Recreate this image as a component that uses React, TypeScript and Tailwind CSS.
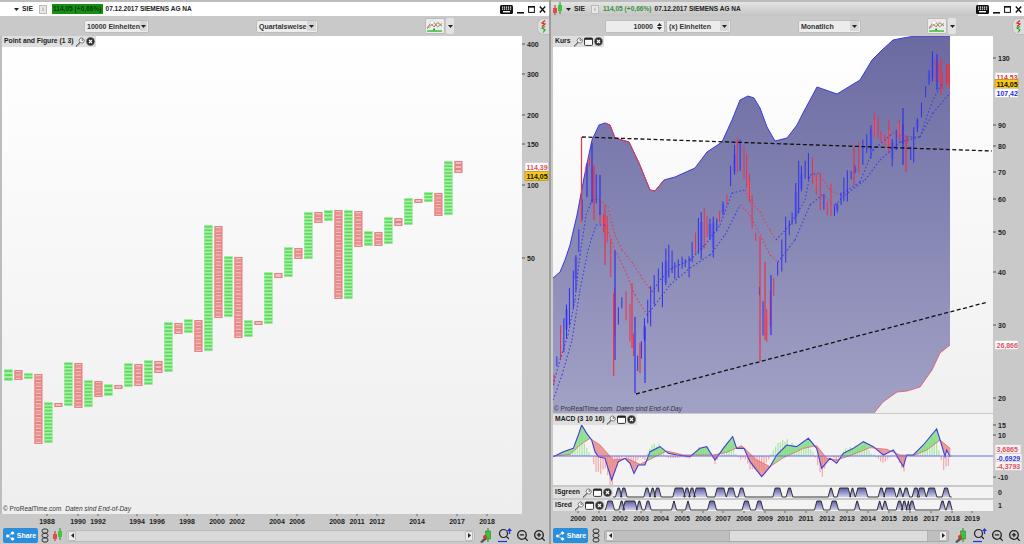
import React from 'react';
import { Search, Share2, ZoomIn, ZoomOut } from 'lucide-react';

type Pt = [number, number];

const rnd = (i: number) => Math.abs((Math.sin(i * 12.9898) * 43758.5453) % 1);

const interp = (pts: Pt[], x: number) => {
    if (x <= pts[0][0]) return pts[0][1];
    for (let i = 1; i < pts.length; i++) {
        if (x <= pts[i][0]) {
            const [x0, y0] = pts[i - 1];
            const [x1, y1] = pts[i];
            return y0 + ((y1 - y0) * (x - x0)) / (x1 - x0);
        }
    }
    return pts[pts.length - 1][1];
};

const toPoints = (pts: Pt[]) => pts.map(([x, y]) => `${x},${y}`).join(' ');

// point and figure columns: first column sits at x=4, one every 10px. [top, bottom]
const pfColumns: Pt[] = [
    [369, 381], [370, 380], [373, 379], [374, 444], [402, 443], [403, 407], [362, 406], [363, 408],
    [380, 407], [381, 397], [384, 396], [385, 389], [363, 387], [364, 386], [360, 385], [361, 373],
    [322, 372], [323, 334], [319, 333], [320, 352], [225, 351], [226, 318], [256, 317], [257, 338],
    [320, 337], [321, 325], [272, 324], [273, 278], [247, 277], [248, 259], [212, 259], [212, 223],
    [210, 221], [210, 299], [210, 299], [211, 247], [231, 246], [232, 246], [217, 244], [218, 226],
    [198, 225], [199, 203], [192, 202], [193, 216], [161, 215], [161, 173],
];

const topEnvelope: Pt[] = [
    [553, 278], [560, 272], [565, 260], [570, 245], [577, 215], [584, 178], [592, 140], [599, 125], [605, 123],
    [610, 125], [615, 138], [629, 142], [639, 163], [650, 190], [655, 191], [664, 180], [675, 177], [695, 168],
    [707, 152], [722, 142], [732, 120], [740, 100], [748, 96], [754, 98], [760, 108], [767, 127], [775, 141],
    [787, 138], [797, 125], [803, 113], [817, 87], [837, 94], [860, 80], [872, 60], [882, 50], [893, 40],
    [903, 38], [915, 36], [950, 36],
];
const bottomEnvelope: Pt[] = [
    [950, 345], [940, 353], [932, 370], [920, 387], [907, 391], [897, 392], [883, 402], [874, 413], [553, 413],
];

const priceCentre: Pt[] = [
    [553, 385], [556, 365], [560, 345], [565, 325], [570, 295], [575, 270], [578, 240], [582, 205], [586, 170],
    [590, 160], [594, 175], [598, 195], [602, 215], [606, 225], [610, 250], [613, 290], [616, 325], [622, 300],
    [628, 295], [632, 320], [636, 365], [640, 350], [645, 335], [650, 305], [655, 290], [660, 278], [665, 280],
    [672, 270], [680, 265], [690, 260], [700, 240], [705, 228], [712, 235], [720, 215], [727, 200], [732, 175],
    [737, 160], [743, 172], [750, 195], [756, 240], [760, 300], [764, 340], [768, 320], [772, 300], [778, 270],
    [785, 245], [795, 210], [800, 190], [806, 170], [812, 160], [816, 178], [820, 195], [826, 212], [835, 212],
    [845, 185], [855, 170], [865, 140], [875, 133], [885, 142], [892, 148], [900, 125], [905, 132], [910, 158],
    [915, 132], [920, 112], [925, 92], [932, 70], [937, 60], [942, 76], [947, 80], [950, 85],
];

const fastMa: Pt[] = [
    [553, 385], [560, 360], [568, 335], [575, 300], [580, 255], [586, 215], [592, 200], [600, 199], [608, 207],
    [615, 235], [622, 250], [632, 262], [640, 275], [652, 292], [660, 280], [672, 268], [690, 260], [705, 245],
    [720, 225], [732, 193], [745, 190], [752, 203], [760, 212], [770, 230], [776, 240], [790, 225], [805, 200],
    [810, 175], [818, 173], [830, 190], [840, 195], [860, 182], [873, 150], [893, 133], [907, 137], [920, 137],
    [932, 102], [942, 83], [950, 85],
];
const slowMa: Pt[] = [
    [553, 400], [562, 375], [572, 340], [580, 290], [588, 250], [596, 225], [606, 225], [615, 250], [625, 270],
    [635, 295], [647, 315], [655, 305], [670, 285], [690, 268], [710, 255], [725, 235], [740, 205], [750, 215],
    [760, 235], [770, 255], [778, 262], [795, 240], [810, 205], [822, 195], [835, 205], [845, 195], [865, 180],
    [880, 160], [900, 142], [920, 137], [933, 113], [950, 93],
];

const macdLine: Pt[] = [
    [10, 155], [40, 140], [70, 130], [85, 90], [95, 60], [110, 85], [125, 105], [135, 140], [145, 155], [165, 160],
    [185, 225], [205, 170], [225, 160], [240, 175], [252, 205], [265, 180], [285, 180], [300, 140], [330, 125],
    [355, 145], [380, 150], [420, 155], [450, 130], [470, 125], [495, 165], [520, 130], [548, 95], [560, 130],
    [582, 130], [600, 170], [635, 215], [660, 185], [680, 150], [710, 120], [740, 125], [775, 100], [800, 130],
    [815, 190], [840, 160], [860, 175], [880, 145], [910, 130], [940, 110], [970, 125], [1000, 150], [1030, 135],
    [1060, 185], [1070, 150], [1090, 150], [1120, 120], [1160, 72], [1175, 120], [1185, 155], [1190, 135], [1200, 155],
];
const signalLine: Pt[] = [
    [10, 153], [60, 148], [90, 120], [120, 100], [150, 120], [190, 165], [230, 160], [270, 178], [310, 158],
    [350, 138], [400, 150], [450, 150], [490, 150], [530, 142], [575, 122], [620, 165], [660, 185], [700, 158],
    [760, 130], [800, 122], [830, 160], [860, 165], [900, 152], [960, 128], [1010, 133], [1050, 150], [1090, 152],
    [1130, 135], [1170, 105], [1200, 130],
];
const macdX = (x: number) => 550 + x / 3;
const macdY = (y: number) => 405 + y / 3;

const isGreen: Pt[] = [
    [200, 212], [215, 228], [285, 297], [303, 313], [316, 330], [372, 402], [405, 417], [420, 432], [435, 468],
    [498, 525], [533, 553], [568, 582], [672, 693], [712, 725], [838, 848], [865, 898], [903, 912], [920, 950],
    [988, 1000], [1005, 1035], [1045, 1055], [1062, 1075], [1090, 1105], [1105, 1125], [1133, 1157], [1180, 1196],
];
const isRed: Pt[] = [
    [170, 190], [210, 220], [222, 258], [263, 273], [288, 300], [368, 376], [410, 418], [476, 496], [580, 598],
    [620, 636], [797, 817], [843, 862], [917, 926], [985, 993], [1000, 1010], [1042, 1055], [1058, 1068],
    [1072, 1078], [1080, 1092], [1172, 1183], [1192, 1203],
];

// the long wicks that the generated bars don't produce: x, top, bottom, blue?
const longBars: [number, number, number, boolean][] = [
    [581.5, 137, 222, false], [587, 163, 197, true], [592, 143, 203, true], [594, 165, 220, false],
    [600, 175, 215, true], [605, 205, 265, false], [615, 250, 360, true], [613.7, 293, 376, false],
    [632, 283, 348, false], [635, 317, 393, true], [645, 327, 383, true], [640, 343, 373, false],
    [760, 237, 361, false], [771, 275, 335, true], [765, 262, 340, false], [937, 54, 90, true],
    [941, 58, 95, false], [948, 64, 84, false], [854, 147, 185, false], [903, 108, 165, true], [906, 135, 172, false],
];

const PfChart = () => (
    <svg viewBox="2 36 520 478" className="block w-[520px] h-[478px]">
        <defs>
            <linearGradient id="chartBg" x1="0" y1="0" x2="0" y2="1">
                <stop offset="0" stopColor="#ffffff" />
                <stop offset="1" stopColor="#eeeeee" />
            </linearGradient>
        </defs>
        <rect x="2" y="36" width="520" height="478" fill="url(#chartBg)" />
        {pfColumns.map(([top, bottom], i) => {
            const x = 4 + i * 10;
            const green = i % 2 === 0;
            const rows = Math.max(1, Math.round((bottom - top) / 3.45));
            const h = (bottom - top) / rows;
            return (
                <g key={i}>
                    <rect x={x} y={top} width={8.8} height={bottom - top} fill={green ? '#aaeeaa' : '#efb0b0'} />
                    {Array.from({ length: rows }).map((_, r) =>
                        green ? (
                            <rect key={r} x={x + 0.6} y={top + r * h + h * 0.28} width={7.6} height={h * 0.5} fill="#5cdc5c" />
                        ) : (
                            <rect key={r} x={x + 1.1} y={top + r * h + 0.6} width={6.6} height={h - 1.2} fill="#f2bcbc" stroke="#e27878" strokeWidth="0.8" />
                        )
                    )}
                </g>
            );
        })}
        <text x="3" y="511" fontSize="6.5" fill="#333">
            © ProRealTime.com <tspan fontStyle="italic" dx="2">Daten sind End-of-Day</tspan>
        </text>
    </svg>
);

const PriceChart = () => {
    const bars = [];
    for (let i = 0, x = 554; x < 950; x += 2.6 + rnd(i + 7) * 1.6, i++) {
        const y = interp(priceCentre, x);
        const up = interp(priceCentre, x + 4) < y;
        const blue = rnd(i) < 0.14 ? !up : up;
        const a = 3 + rnd(i + 40) * rnd(i + 41) * 34;
        const b = 3 + rnd(i + 90) * rnd(i + 91) * 34;
        bars.push({ x, y, a, b, blue, body: rnd(i + 200) < 0.3 });
    }
    return (
        <svg viewBox="553 36 440 377" className="block w-[440px] h-[377px]">
            <defs>
                <linearGradient id="chartBg2" x1="0" y1="0" x2="0" y2="1">
                    <stop offset="0" stopColor="#ffffff" />
                    <stop offset="1" stopColor="#f0f0f0" />
                </linearGradient>
                <linearGradient id="kursFill" gradientUnits="userSpaceOnUse" x1="0" y1="36" x2="0" y2="413">
                    <stop offset="0" stopColor="#6a6aa2" />
                    <stop offset="1" stopColor="#a2a2c6" />
                </linearGradient>
            </defs>
            <rect x="553" y="36" width="440" height="377" fill="url(#chartBg2)" />
            <polygon points={toPoints([...topEnvelope, ...bottomEnvelope])} fill="url(#kursFill)" />
            <polyline points={toPoints(topEnvelope)} fill="none" stroke="#3a3ae0" strokeWidth="1" />
            <polyline points={toPoints(topEnvelope.slice(8, 16))} fill="none" stroke="#e83a4a" strokeWidth="1" />
            <polyline points={toPoints(bottomEnvelope.slice(0, 8))} fill="none" stroke="#e85a6a" strokeWidth="0.9" />
            {bars.map((b, i) => (
                <g key={i}>
                    {b.body && (
                        <rect
                            x={b.x - 1.5}
                            y={b.y - b.a * 0.6}
                            width={3}
                            height={(b.a + b.b) * 0.6}
                            fill={b.blue ? '#5a5ae8' : '#e86a78'}
                            opacity="0.55"
                        />
                    )}
                    <line x1={b.x} x2={b.x} y1={b.y - b.a} y2={b.y + b.b} stroke={b.blue ? '#3030ee' : '#ee3048'} strokeWidth="1" />
                </g>
            ))}
            {longBars.map(([x, top, bottom, blue], i) => (
                <line key={i} x1={x} x2={x} y1={top} y2={bottom} stroke={blue ? '#3030ee' : '#ee3048'} strokeWidth="1.2" />
            ))}
            {[fastMa, slowMa].map((ma, m) => {
                const segs = [];
                for (let i = 1; i < ma.length; i++) {
                    const falling = ma[i][1] > ma[i - 1][1];
                    segs.push(
                        <line
                            key={i}
                            x1={ma[i - 1][0]}
                            y1={ma[i - 1][1]}
                            x2={ma[i][0]}
                            y2={ma[i][1]}
                            stroke={falling ? '#e83a4a' : '#3a3ae8'}
                            strokeWidth="1.1"
                            strokeDasharray="1.5 2.2"
                        />
                    );
                }
                return <g key={m}>{segs}</g>;
            })}
            <line x1="582" y1="137" x2="992" y2="151" stroke="#111" strokeWidth="1.3" strokeDasharray="4 2.5" />
            <line x1="636" y1="394" x2="988" y2="302" stroke="#111" strokeWidth="1.3" strokeDasharray="4 2.5" />
            <text x="554" y="411" fontSize="6.5" fill="#333">
                © ProRealTime.com <tspan fontStyle="italic" dx="2">Daten sind End-of-Day</tspan>
            </text>
        </svg>
    );
};

const MacdChart = () => {
    const fill: React.ReactNode[] = [];
    for (let x = 10; x < 1200; x += 3) {
        const m0 = interp(macdLine, x);
        const s0 = interp(signalLine, x);
        const m1 = interp(macdLine, x + 3);
        const s1 = interp(signalLine, x + 3);
        fill.push(
            <polygon
                key={x}
                points={`${macdX(x)},${macdY(m0)} ${macdX(x + 3)},${macdY(m1)} ${macdX(x + 3)},${macdY(s1)} ${macdX(x)},${macdY(s0)}`}
                fill={m0 + m1 < s0 + s1 ? '#7fdc7f' : '#e98484'}
            />
        );
    }
    const hist: React.ReactNode[] = [];
    for (let x = 12, i = 0; x < 1200; x += 7, i++) {
        const diff = (interp(signalLine, x) - interp(macdLine, x)) / 3;
        const h = diff * (0.9 + rnd(i) * 0.7);
        hist.push(
            <line
                key={x}
                x1={macdX(x)}
                x2={macdX(x)}
                y1={456}
                y2={456 - h * 1.1}
                stroke={diff > 0 ? '#a4e8a4' : '#f2a8a8'}
                strokeWidth="1.2"
            />
        );
    }
    return (
        <svg viewBox="553 414 440 71" className="block w-[440px] h-[71px]">
            <rect x="553" y="414" width="440" height="71" fill="#f3f3f3" />
            {hist}
            {fill}
            <polyline points={toPoints(signalLine.map(([x, y]) => [macdX(x), macdY(y)] as Pt))} fill="none" stroke="#e56a6a" strokeWidth="0.8" />
            <polyline points={toPoints(macdLine.map(([x, y]) => [macdX(x), macdY(y)] as Pt))} fill="none" stroke="#4040d8" strokeWidth="1.1" />
            <line x1="553" x2="993" y1="456" y2="456" stroke="#6a6ae0" strokeWidth="1" />
        </svg>
    );
};

const PulseRow = ({ id, pulses }: { id: string; pulses: Pt[] }) => {
    let d = `M ${macdX(pulses[0][0]) - 20} 10`;
    pulses.forEach(([a, b]) => {
        const x0 = macdX(a);
        const x1 = macdX(b);
        d += ` L ${x0 - 1.2} 10 L ${x0 + 1.2} 1 L ${x1 - 1.2} 1 L ${x1 + 1.2} 10`;
    });
    d += ` L ${macdX(1205)} 10`;
    return (
        <svg viewBox="0 0 440 11" className="block w-[440px] h-[11px] bg-[#f3f3f3]">
            <defs>
                <linearGradient id={id} x1="0" y1="0" x2="0" y2="1">
                    <stop offset="0" stopColor="#5a5aa8" />
                    <stop offset="1" stopColor="#cfcfe8" />
                </linearGradient>
            </defs>
            <g transform="translate(-553 0)">
                {pulses.map(([a, b], i) => (
                    <polygon
                        key={i}
                        points={`${macdX(a) - 1.2},10 ${macdX(a) + 1.2},1 ${macdX(b) - 1.2},1 ${macdX(b) + 1.2},10`}
                        fill={`url(#${id})`}
                    />
                ))}
                <path d={d} fill="none" stroke="#222" strokeWidth="0.9" />
            </g>
        </svg>
    );
};

const Axis = ({ x, y, w, h, labels, children }: { x: number; y: number; w: number; h: number; labels: [string, number][]; children?: React.ReactNode }) => (
    <svg viewBox={`${x} ${y} ${w} ${h}`} style={{ width: w, height: h }} className="block shrink-0">
        {labels.map(([t, ly]) => (
            <g key={t}>
                <line x1={x} x2={x + 3} y1={ly} y2={ly} stroke="#555" strokeWidth="1" />
                <text x={x + 5} y={ly + 2.5} fontSize="7" fontWeight="700" fill="#222">{t}</text>
            </g>
        ))}
        {children}
    </svg>
);

const PriceTag = ({ x, y, text, color, bg, w = 23 }: { x: number; y: number; text: string; color: string; bg: string; w?: number }) => (
    <g>
        <rect x={x} y={y - 4.5} width={w} height={9} fill={bg} stroke={bg === '#f7c815' ? '#c09000' : '#cccccc'} strokeWidth="0.7" />
        <text x={x + 1.5} y={y + 2.5} fontSize="7" fontWeight="700" fill={color}>{text}</text>
    </g>
);

const YearAxis = ({ x, w, h, baseline, labels }: { x: number; w: number; h: number; baseline: number; labels: Pt[] }) => (
    <svg viewBox={`${x} 0 ${w} ${h}`} style={{ width: w, height: h }} className="block shrink-0">
        {labels.map(([year, cx]) => (
            <g key={year}>
                <line x1={cx} x2={cx} y1={0} y2={2} stroke="#666" />
                <text x={cx} y={baseline} textAnchor="middle" fontSize="7" fontWeight="700" fill="#222">{year}</text>
            </g>
        ))}
    </svg>
);

const KeyboardIcon = () => (
    <svg width="13" height="9" viewBox="0 0 13 9">
        <rect width="13" height="9" rx="1.5" fill="#111" />
        {[0, 1].map((r) => [2, 4, 6, 8, 10].map((x) => <rect key={`${r}${x}`} x={x} y={1.5 + r * 2} width="1.2" height="1.2" fill="#fff" />))}
        <rect x="3" y="6" width="7" height="1.4" fill="#fff" />
    </svg>
);

const WindowControls = () => (
    <div className="flex items-center gap-[4px]">
        <KeyboardIcon />
        <svg width="7" height="9" viewBox="0 0 7 9"><rect x="0" y="7" width="7" height="1.6" fill="#111" /></svg>
        <svg width="7" height="9" viewBox="0 0 7 9"><rect x="0.6" y="1.6" width="5.8" height="5.8" fill="none" stroke="#111" strokeWidth="1" /><rect x="0" y="1" width="7" height="1.6" fill="#111" /></svg>
        <svg width="7" height="9" viewBox="0 0 7 9"><path d="M0.8 1.5 L6.2 7.5 M6.2 1.5 L0.8 7.5" stroke="#111" strokeWidth="1.4" /></svg>
    </div>
);

const InfoBox = () => (
    <span className="flex items-center justify-center w-[8px] h-[9px] bg-[#e8e8e8] border border-[#bbbbbb] text-[6px] leading-none text-[#666666]">i</span>
);

const CaretDown = () => (
    <svg width="5" height="3" viewBox="0 0 5 3" className="shrink-0"><path d="M0 0 H5 L2.5 3 Z" fill="#222" /></svg>
);

const Dropdown = ({ label, w }: { label: string; w: string }) => (
    <div className={`flex items-center justify-between h-[13px] rounded-[2px] border border-[#bcbcbc] bg-[#ececec] pl-[1px] pr-[1px] ${w}`}>
        <span className="text-[7px] font-bold text-[#333333] leading-none whitespace-nowrap pl-[1px]">{label}</span>
        <span className="flex items-center justify-center w-[9px] h-[10px] bg-[#d6d6d6]"><CaretDown /></span>
    </div>
);

const ChartTypeButton = () => (
    <div className="flex items-center gap-[1px]">
        <div className="w-[20px] h-[16px] rounded-[2px] border border-[#bcbcbc] bg-[#ececec]">
            <svg viewBox="0 0 20 16" className="w-full h-full">
                <path d="M1 10 L5 5 L9 9 L13 4 L18 8" fill="none" stroke="#d33" strokeWidth="0.9" />
                <path d="M1 11 L5 8 L9 4 L13 9 L18 5" fill="none" stroke="#3a3" strokeWidth="0.9" />
                <rect x="1" y="13" width="17" height="1.5" fill="#22bb22" />
                <rect x="8" y="11" width="2" height="2" fill="#228822" />
                <rect x="4" y="2" width="5" height="4" rx="2" fill="#ffffff" stroke="#aaa" strokeWidth="0.5" />
            </svg>
        </div>
        <div className="flex items-center justify-center w-[8px] h-[16px] rounded-[2px] bg-[#e2e2e2]"><CaretDown /></div>
    </div>
);

const Flyout = () => (
    <div className="flex items-center justify-center w-[12px] h-[17px] rounded-l-[6px] border border-r-0 border-[#bdbdbd] bg-[#dcdcdc]">
        <svg width="7" height="13" viewBox="0 0 7 13">
            <path d="M5 0.5 L2 3 L5 4 L2 6.5" fill="none" stroke="#dd2222" strokeWidth="1.2" />
            <path d="M5 6.5 L2 8 L5 10 L3 12.5" fill="none" stroke="#22aa22" strokeWidth="1.2" />
        </svg>
    </div>
);

const WrenchIcon = () => (
    <svg width="10" height="10" viewBox="0 0 10 10">
        <path d="M1 9 L5 5 A2.2 2.2 0 0 1 8 1.6 L6.6 3 L7.4 3.8 L8.8 2.4 A2.2 2.2 0 0 1 5.6 5.4 L2 9.4 Z" fill="#fff" stroke="#444" strokeWidth="0.7" />
    </svg>
);

const WindowIcon = () => (
    <svg width="9" height="9" viewBox="0 0 9 9">
        <rect x="0.5" y="1" width="8" height="7.4" rx="1" fill="#fff" stroke="#222" strokeWidth="0.9" />
        <rect x="0.5" y="1" width="8" height="1.8" fill="#222" />
    </svg>
);

const CloseIcon = () => (
    <svg width="9" height="9" viewBox="0 0 9 9">
        <circle cx="4.5" cy="4.5" r="4.2" fill="#333" stroke="#999" strokeWidth="0.5" />
        <path d="M3 3 L6 6 M6 3 L3 6" stroke="#fff" strokeWidth="1.1" />
    </svg>
);

const Legend = ({ name, withWindow }: { name: string; withWindow?: boolean }) => (
    <div className="absolute left-0 top-0 flex items-center gap-[1px] h-[11px] pl-[2px] pr-[1px] bg-[#dfdfdf]">
        <span className="text-[6.8px] font-bold text-[#222222] leading-none whitespace-nowrap mr-[1px]">{name}</span>
        <WrenchIcon />
        {withWindow && <WindowIcon />}
        <CloseIcon />
    </div>
);

const ShareButton = () => (
    <div className="flex items-center justify-center gap-[2px] w-[35px] h-[15px] rounded-[2px] bg-[#2a8edb] shrink-0">
        <Share2 size={10} color="#ffffff" fill="#ffffff" strokeWidth={1.5} />
        <span className="text-[7px] font-bold text-white leading-none">Share</span>
    </div>
);

const CandleIcon = () => (
    <svg width="11" height="15" viewBox="0 0 11 15" className="shrink-0">
        <line x1="3" x2="3" y1="3" y2="13" stroke="#a33" />
        <rect x="1" y="6" width="4" height="5" fill="#e84848" />
        <line x1="8" x2="8" y1="0" y2="12" stroke="#282" />
        <rect x="6" y="3" width="4" height="6" fill="#3cc93c" />
    </svg>
);

const ChainIcon = () => (
    <svg width="8" height="15" viewBox="0 0 8 15" className="shrink-0">
        <rect x="1" y="1" width="6" height="4" rx="2" fill="none" stroke="#333" />
        <rect x="1" y="5.5" width="6" height="4" rx="2" fill="none" stroke="#333" />
        <rect x="1" y="10" width="6" height="4" rx="2" fill="none" stroke="#333" />
    </svg>
);

const ArrowBox = ({ dir }: { dir: 'left' | 'right' }) => (
    <span className="flex items-center justify-center w-[8px] h-[10px] bg-[#ececec] border border-[#bbbbbb] rounded-[1px] shrink-0">
        <svg width="3" height="5" viewBox="0 0 3 5">
            <path d={dir === 'left' ? 'M3 0 V5 L0 2.5 Z' : 'M0 0 V5 L3 2.5 Z'} fill="#222" />
        </svg>
    </span>
);

const BottomIcons = () => (
    <div className="flex items-center gap-[4px] shrink-0">
        <svg width="15" height="15" viewBox="0 0 15 15">
            <line x1="9" x2="9" y1="0" y2="14" stroke="#282" />
            <rect x="6.5" y="3" width="5" height="8" fill="#39c439" stroke="#272" strokeWidth="0.5" />
            <path d="M1 14 L6 9 L8 11 L3 15 Z" fill="#555" />
            <circle cx="6" cy="9" r="2" fill="#d33" />
        </svg>
        <div className="relative w-[14px] h-[15px]">
            <Search size={12} color="#222" strokeWidth={2.4} />
            <svg width="5" height="6" viewBox="0 0 5 6" className="absolute right-0 top-0"><path d="M2.5 0 L5 3 H3.2 V6 H1.8 V3 H0 Z" fill="#2233dd" /></svg>
            <svg width="9" height="3" viewBox="0 0 9 3" className="absolute left-0 bottom-0"><path d="M0 1.5 H9" stroke="#2233dd" strokeWidth="1.2" /></svg>
        </div>
        <ZoomOut size={13} color="#222" strokeWidth={2.4} />
        <ZoomIn size={13} color="#222" strokeWidth={2.4} />
    </div>
);

const leftYears: Pt[] = [
    [1988, 47], [1990, 78], [1992, 98], [1994, 137], [1996, 157], [1998, 187], [2000, 217], [2002, 237],
    [2004, 277], [2006, 297], [2008, 337], [2011, 357], [2012, 377], [2014, 417], [2017, 457], [2018, 487],
];
const rightYears: Pt[] = [
    [2000, 578], [2001, 599], [2002, 620], [2003, 641], [2004, 661], [2005, 682], [2006, 703], [2007, 723],
    [2008, 744], [2009, 765], [2010, 785], [2011, 806], [2012, 827], [2013, 847], [2014, 868], [2015, 889],
    [2016, 910], [2017, 931], [2018, 952], [2019, 972],
];

export default function App() {
    return (
        <div className="flex w-[1024px] h-[544px] overflow-hidden bg-[#c9c9c9] font-['Liberation_Sans',Arial,sans-serif]">
            {/* left window: point and figure */}
            <div className="flex flex-col w-[549px] shrink-0">
                <div className="flex items-center justify-between h-[16px] bg-white border-t-2 border-[#bdbdbd] pl-[14px] pr-[3px]">
                    <div className="flex items-center gap-[3px]">
                        <CaretDown />
                        <span className="text-[6.8px] font-bold text-[#222222] leading-none">SIE</span>
                        <span className="ml-[3px]"><InfoBox /></span>
                        <span className="ml-[2px] flex items-center h-[10px] px-[1px] bg-[#159015] text-[6.6px] font-bold leading-none text-[#0c3d0c] whitespace-nowrap">114,05 (+0,66%)</span>
                        <span className="text-[6.5px] font-bold text-[#222222] leading-none whitespace-nowrap">07.12.2017 SIEMENS AG NA</span>
                    </div>
                    <WindowControls />
                </div>
                <div className="flex items-center h-[20px] pl-[84px] pr-0">
                    <Dropdown label="10000 Einheiten" w="w-[65px]" />
                    <div className="ml-[107px]"><Dropdown label="Quartalsweise" w="w-[62px]" /></div>
                    <div className="ml-[107px]"><ChartTypeButton /></div>
                    <div className="ml-auto"><Flyout /></div>
                </div>
                <div className="flex">
                    <div className="w-[2px] bg-[#bdbdbd] shrink-0" />
                    <div className="relative">
                        <PfChart />
                        <Legend name="Point and Figure (1 3)" />
                    </div>
                    <Axis x={522} y={36} w={27} h={478} labels={[['400', 44], ['300', 74], ['200', 115], ['150', 144], ['100', 185], ['50', 258]]}>
                        <PriceTag x={525} y={167} text="114,39" color="#e05060" bg="#ffffff" />
                        <PriceTag x={525} y={176} text="114,05" color="#111111" bg="#f7c815" />
                    </Axis>
                </div>
                <YearAxis x={0} w={549} h={13} baseline={10} labels={leftYears} />
                <div className="flex items-center gap-[3px] h-[17px] pl-[3px] pr-[3px]">
                    <ShareButton />
                    <ChainIcon />
                    <CandleIcon />
                    <div className="flex-1 flex items-center justify-between h-[12px] rounded-[2px] bg-[#d9d9d9] border border-[#bcbcbc] px-[1px] mr-[1px]">
                        <ArrowBox dir="left" />
                        <ArrowBox dir="right" />
                    </div>
                    <BottomIcons />
                </div>
            </div>

            <div className="w-[2px] bg-[#9c9c9c] shrink-0" />

            {/* right window: monthly chart with indicators */}
            <div className="flex flex-col w-[473px] shrink-0">
                <div className="flex items-center h-[16px] border-t-2 border-[#bdbdbd] bg-gradient-to-b from-[#e4e4e4] to-[#c4c4c4]">
                    <div className="flex flex-1 items-center gap-[3px] pl-[1px]">
                        <CandleIcon />
                        <CaretDown />
                        <span className="text-[6.8px] font-bold text-[#222222] leading-none">SIE</span>
                        <span className="ml-[3px]"><InfoBox /></span>
                        <span className="ml-[1px] text-[6.6px] font-bold leading-none text-[#3a8f3a] whitespace-nowrap">114,05 (+0,66%)</span>
                        <span className="text-[6.5px] font-bold text-[#222222] leading-none whitespace-nowrap">07.12.2017 SIEMENS AG NA</span>
                    </div>
                    <div className="flex items-center justify-end w-[46px] h-full bg-white pr-[2px]">
                        <WindowControls />
                    </div>
                </div>
                <div className="flex items-center h-[20px] pl-[54px]">
                    <div className="flex items-center justify-end w-[60px] h-[13px] rounded-[2px] border border-[#bcbcbc] bg-[#ececec] pr-[1px]">
                        <span className="text-[7px] font-bold text-[#333333] leading-none mr-[2px]">10000</span>
                        <span className="flex flex-col items-center gap-[1px] w-[8px]">
                            <svg width="5" height="3" viewBox="0 0 5 3"><path d="M0 3 H5 L2.5 0 Z" fill="#222" /></svg>
                            <CaretDown />
                        </span>
                    </div>
                    <div className="ml-[1px]"><Dropdown label="(x) Einheiten" w="w-[65px]" /></div>
                    <div className="ml-[67px]"><Dropdown label="Monatlich" w="w-[63px]" /></div>
                    <div className="ml-[66px]"><ChartTypeButton /></div>
                    <div className="ml-auto"><Flyout /></div>
                </div>
                <div className="flex">
                    <div className="w-[2px] shrink-0" />
                    <div className="relative">
                        <PriceChart />
                        <Legend name="Kurs" withWindow />
                    </div>
                    <Axis x={993} y={36} w={31} h={377} labels={[['130', 58], ['90', 125], ['80', 146], ['70', 172], ['60', 199], ['50', 232], ['40', 272], ['30', 325], ['20', 398]]}>
                        <PriceTag x={995} y={77} text="114,53" color="#e03040" bg="#ffffff" />
                        <PriceTag x={995} y={84} text="114,05" color="#111111" bg="#f7c815" />
                        <PriceTag x={995} y={93} text="107,42" color="#2a2ad8" bg="#ffffff" />
                        <PriceTag x={995} y={345} text="26,866" color="#e05060" bg="#ffffff" />
                    </Axis>
                </div>
                <div className="flex mt-[1px]">
                    <div className="w-[2px] shrink-0" />
                    <div className="relative">
                        <MacdChart />
                        <Legend name="MACD (3 10 16)" withWindow />
                    </div>
                    <Axis x={993} y={414} w={31} h={71} labels={[['15', 425], ['10', 435], ['-10', 477]]}>
                        <PriceTag x={995} y={449} text="3,6865" color="#e05060" bg="#f3f3f3" w={26} />
                        <PriceTag x={995} y={458} text="-0,6929" color="#3a3ad8" bg="#f3f3f3" w={27} />
                        <PriceTag x={995} y={466} text="-4,3793" color="#e05060" bg="#f3f3f3" w={27} />
                    </Axis>
                </div>
                <div className="flex mt-[2px]">
                    <div className="w-[2px] shrink-0" />
                    <div className="relative">
                        <PulseRow id="isGreenFill" pulses={isGreen} />
                        <Legend name="ISgreen" withWindow />
                    </div>
                    <span className="pl-[5px] text-[7px] font-bold text-[#222222] leading-[11px]">0</span>
                </div>
                <div className="flex mt-[2px]">
                    <div className="w-[2px] shrink-0" />
                    <div className="relative">
                        <PulseRow id="isRedFill" pulses={isRed} />
                        <Legend name="ISred" withWindow />
                    </div>
                    <span className="pl-[5px] text-[7px] font-bold text-[#222222] leading-[11px]">1</span>
                </div>
                <YearAxis x={551} w={473} h={16} baseline={10} labels={rightYears} />
                <div className="flex items-center gap-[4px] h-[17px] pl-[2px] pr-[3px]">
                    <ShareButton />
                    <ChainIcon />
                    <div className="relative flex-1 flex items-center justify-between h-[12px] rounded-[2px] bg-[#bfbfbf] border border-[#aaaaaa] px-[1px] mr-[1px]">
                        <ArrowBox dir="left" />
                        <span className="absolute left-[124px] right-[20px] top-0 bottom-0 bg-[#dcdcdc] border-x border-[#b0b0b0]" />
                        <ArrowBox dir="right" />
                    </div>
                    <BottomIcons />
                </div>
            </div>
        </div>
    );
}
